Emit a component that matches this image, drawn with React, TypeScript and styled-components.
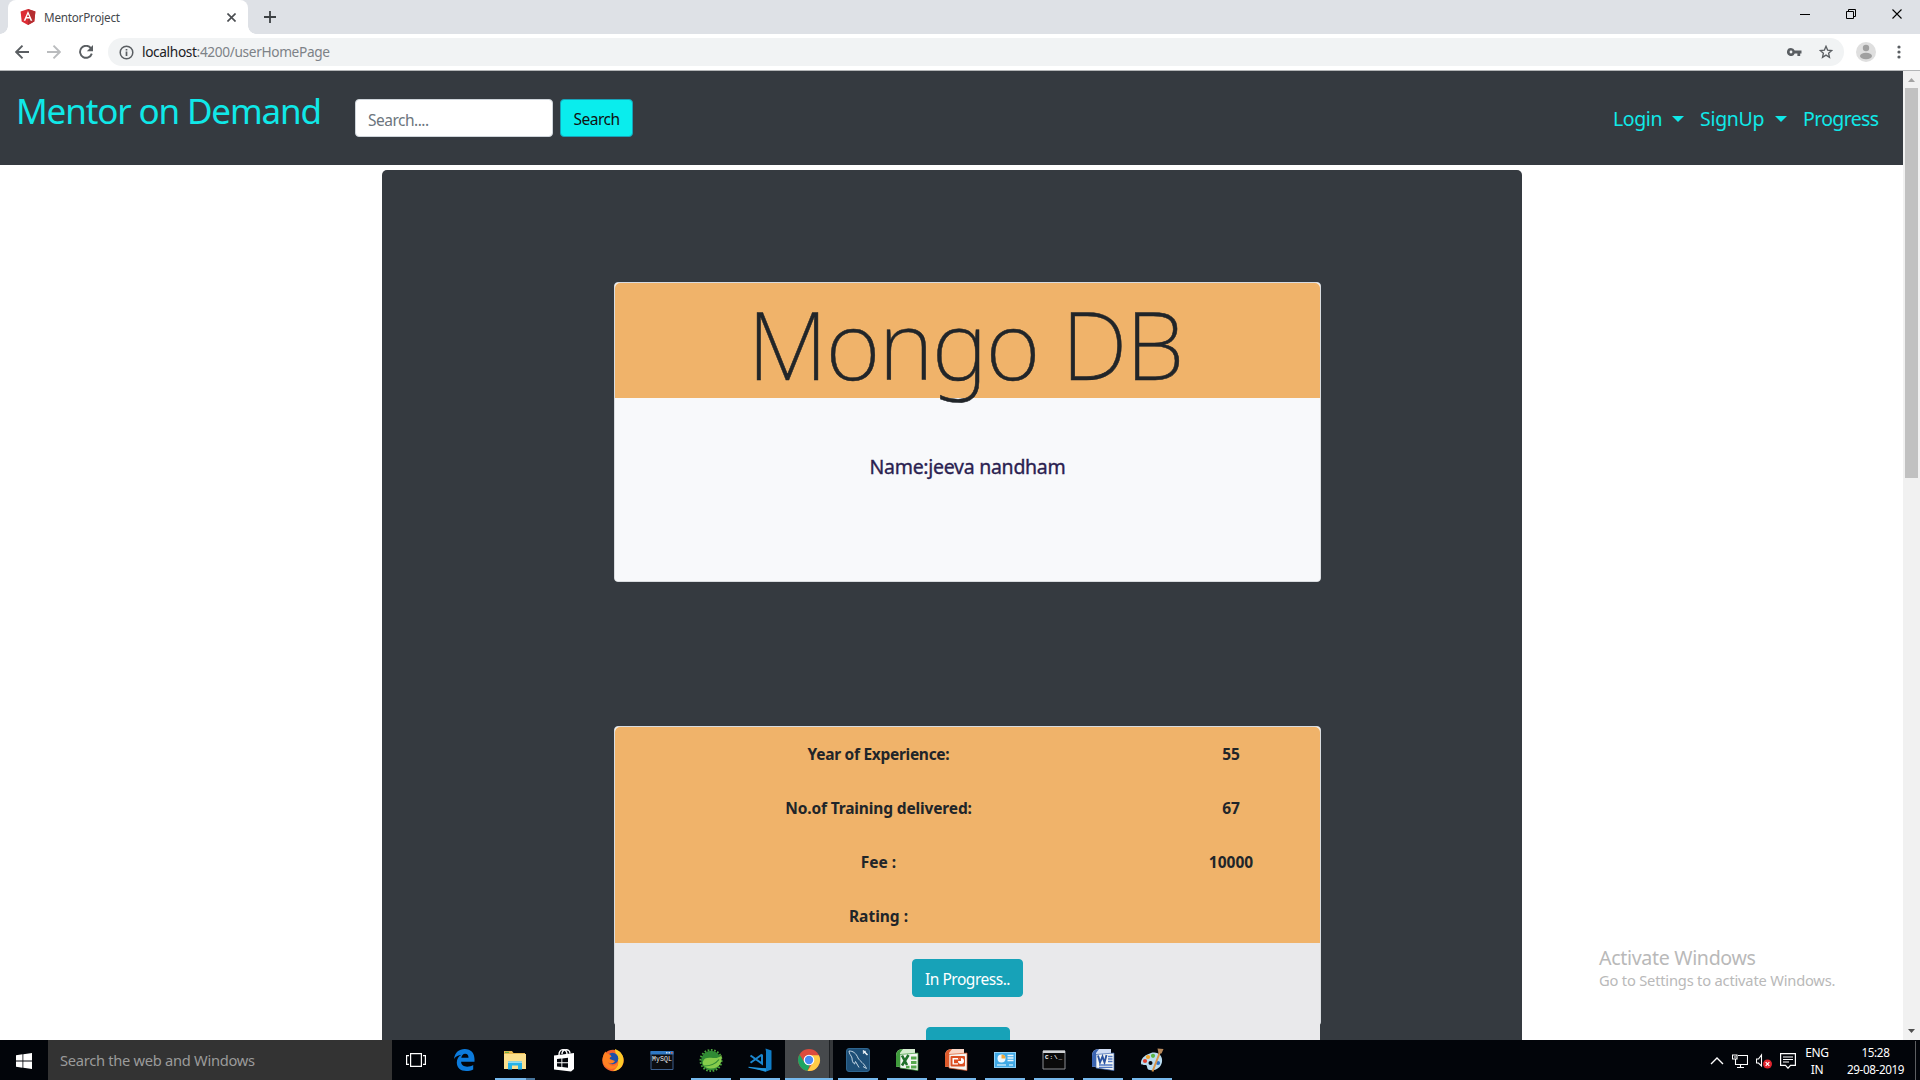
import React from 'react';
import styled, { createGlobalStyle, css } from 'styled-components';

const GlobalStyle = createGlobalStyle`
  *, *::before, *::after { box-sizing: border-box; }
  body { margin: 0; overflow: hidden; background: #fff; }
`;

const Screen = styled.div`
  position: relative;
  display: flex;
  flex-direction: column;
  width: 1920px;
  height: 1080px;
  overflow: hidden;
  font-family: 'Noto Sans', 'Open Sans', sans-serif;
  color: #212529;
  white-space: nowrap;
`;

/* ---------- browser chrome ---------- */

const TabStrip = styled.div`
  display: flex;
  flex: 0 0 34px;
  padding-left: 8px;
  background: #dee1e6;
`;

const Tab = styled.div`
  position: relative;
  display: flex;
  align-items: center;
  width: 240px;
  height: 34px;
  padding: 0 12px 0 12px;
  background: #fff;
  border-radius: 8px 8px 0 0;

  &::before,
  &::after {
    content: '';
    position: absolute;
    bottom: 0;
    width: 8px;
    height: 8px;
  }
  &::before {
    left: -8px;
    background: radial-gradient(circle at 0 0, transparent 7.5px, #fff 8px);
  }
  &::after {
    right: -8px;
    background: radial-gradient(circle at 100% 0, transparent 7.5px, #fff 8px);
  }
`;

const TabTitle = styled.span`
  flex: 1;
  margin-left: 8px;
  font-size: 11.7px;
  letter-spacing: -0.22px;
  line-height: 34px;
  color: #45494d;
`;

const NewTab = styled.div`
  display: flex;
  align-items: center;
  margin-left: 16px;
`;

const WindowControls = styled.div`
  display: flex;
  gap: 36px;
  margin: 9px 18px 0 auto;
  height: 10px;
`;

const Toolbar = styled.div`
  display: flex;
  flex: 0 0 37px;
  align-items: center;
  padding: 0 16px 0 15px;
  background: #fff;
  border-bottom: 1px solid #b3b5b7;
`;

const NavIcons = styled.div`
  display: flex;
  gap: 18px;
  margin-right: 15px;
`;

const Omnibox = styled.div`
  display: flex;
  align-items: center;
  width: 1736px;
  height: 28px;
  padding: 0 11px;
  border-radius: 14px;
  background: #f1f3f4;
`;

const Url = styled.span`
  flex: 1;
  margin-left: 8px;
  font-size: 13.7px;
  letter-spacing: -0.36px;
  line-height: 28px;
  color: #7d8287;
`;

const UrlHost = styled.span`
  color: #202124;
`;

const OmniboxActions = styled.div`
  display: flex;
  align-items: center;
  gap: 17px;
`;

const Avatar = styled.div`
  display: flex;
  margin: 0 21px 0 12px;
`;

/* ---------- page ---------- */

const Viewport = styled.div`
  display: flex;
  flex: 0 0 969px;
  overflow: hidden;
`;

const Page = styled.main`
  width: 1903px;
  height: 969px;
  overflow: hidden;
  background: #fff;
`;

const Navbar = styled.nav`
  display: flex;
  align-items: flex-start;
  height: 94px;
  padding: 0 24px 0 16px;
  background: #353a40;
  color: #10e8e8;
`;

const Brand = styled.a`
  width: 339px;
  padding-top: 13px;
  font-size: 35px;
  letter-spacing: -1.15px;
  line-height: 54px;
`;

const SearchForm = styled.form`
  display: flex;
  gap: 7px;
  margin-top: 28px;
`;

const SearchInput = styled.input`
  width: 198px;
  height: 38px;
  padding: 3px 12px 0;
  border: 1px solid #ced4da;
  border-radius: 4px;
  background: #fff;
  font: 15.5px 'Noto Sans', sans-serif;
  letter-spacing: -0.5px;

  &::placeholder {
    color: #6c757d;
    opacity: 1;
  }
`;

const Button = styled.button<{ $w: number; $search?: boolean }>`
  width: ${(p) => p.$w}px;
  height: 38px;
  padding: 1px 0 0;
  border: 1px solid #17a2b8;
  border-radius: 4px;
  background: ${(p) => (p.$search ? '#0aeded' : '#17a2b8')};
  color: ${(p) => (p.$search ? '#111' : '#fff')};
  font: 15.5px 'Noto Sans', sans-serif;
  letter-spacing: -0.48px;
`;

const NavLinks = styled.div`
  display: flex;
  gap: 16px;
  margin-left: auto;
`;

const NavLink = styled.a<{ $w: number; $ls: number }>`
  display: flex;
  align-items: center;
  justify-content: space-between;
  width: ${(p) => p.$w}px;
  font-size: 19.5px;
  letter-spacing: ${(p) => p.$ls}px;
  line-height: 95px;
`;

const Caret = styled.span`
  width: 12px;
  border: 6px solid transparent;
  border-top-color: #10e8e8;
  border-bottom: 0;
`;

const Shell = styled.section`
  display: flex;
  flex-direction: column;
  gap: 144px;
  width: 1140px;
  height: 1400px;
  margin: 5px auto 0;
  padding: 112px 0 0 232.5px;
  border-radius: 5px;
  background: #353a40;
`;

const Card = styled.article`
  flex: none;
  width: 707px;
  height: 300px;
  border: 1px solid #d9dce0;
  border-radius: 4px;
  background: #fff;
`;

const orangeTop = css`
  background: #f0b36a;
  border-radius: 5px 5px 0 0;
`;

const CourseTitle = styled.h1`
  ${orangeTop}
  height: 115px;
  margin: 0;
  padding-right: 5px;
  font-size: 94px;
  font-weight: 200;
  letter-spacing: -1.6px;
  line-height: 122px;
  text-align: center;
  -webkit-text-stroke: 0.5px #212529;
`;

const CourseBody = styled.div`
  height: 183px;
  padding-top: 50px;
  border-radius: 0 0 3px 3px;
  background: #f8f9fb;
`;

const MentorName = styled.h5`
  margin: 0;
  font-size: 19.5px;
  font-weight: 400;
  letter-spacing: -0.28px;
  line-height: 38px;
  text-align: center;
  color: #2a2150;
  -webkit-text-stroke: 0.35px #2a2150;
`;

const Facts = styled.dl`
  ${orangeTop}
  display: grid;
  grid-template-columns: 527px 178px;
  grid-auto-rows: 54px;
  margin: 0;
  font-size: 15.5px;
  font-weight: 700;
  line-height: 55px;
  text-align: center;
`;

const Fact = styled.dt<{ $ls?: number }>`
  letter-spacing: ${(p) => p.$ls ?? 0}px;
`;

const FactValue = styled.dd`
  margin: 0;
`;

const Actions = styled.div`
  display: flex;
  flex-direction: column;
  align-items: center;
  gap: 30px;
  height: 200px;
  padding-top: 16px;
  background: #e9e9eb;
`;

const Scrollbar = styled.div`
  display: flex;
  flex-direction: column;
  align-items: center;
  width: 17px;
  background: #f1f1f1;
`;

const Thumb = styled.div`
  width: 13px;
  height: 390px;
  margin-bottom: auto;
  background: #c1c1c1;
`;

const Watermark = styled.div`
  position: absolute;
  left: 1599px;
  top: 943px;
  color: #b9b9b9;
`;

const WatermarkTitle = styled.div`
  font-size: 19.6px;
  letter-spacing: -0.33px;
  line-height: 29px;
`;

const WatermarkText = styled.div`
  font-size: 14.7px;
  letter-spacing: -0.2px;
  line-height: 16px;
`;

/* ---------- taskbar ---------- */

const Taskbar = styled.footer`
  display: flex;
  flex: 0 0 40px;
  background: #02050a;
  color: #fff;
`;

const Start = styled.div`
  display: flex;
  align-items: center;
  justify-content: center;
  width: 48px;
`;

const TaskSearch = styled.div`
  width: 344px;
  padding-left: 12px;
  background: #333;
  color: #9b9b9b;
  font-size: 14.7px;
  letter-spacing: -0.29px;
  line-height: 41px;
`;

const Apps = styled.div`
  display: flex;
  gap: 1px;
`;

const AppSlot = styled.div<{ $running?: boolean; $active?: boolean; $stacked?: boolean }>`
  display: flex;
  align-items: center;
  justify-content: center;
  width: 48px;
  height: 40px;
  background: ${(p) =>
    p.$active
      ? 'linear-gradient(90deg, #46494c 44px, #1d2023 44px, #1d2023 45px, #34373a 45px)'
      : 'transparent'};

  &::after {
    content: '';
    align-self: flex-end;
    width: ${(p) => (p.$active ? 48 : 40)}px;
    height: 2px;
    margin-left: ${(p) => (p.$active ? -48 : -40)}px;
    background: ${(p) =>
      p.$stacked
        ? 'linear-gradient(90deg, #76b9ed 31px, #47759c 31px)'
        : p.$running || p.$active
          ? '#76b9ed'
          : 'transparent'};
  }

  & > svg {
    flex: none;
    margin: 0 ${(p) => (p.$active ? 12 : 8)}px;
  }
`;

const AppGroup = styled.div`
  display: flex;
  gap: 1px;
  margin-left: 1px;
`;

const Tray = styled.div`
  display: flex;
  align-items: center;
  margin-left: auto;
`;

const TrayIcons = styled.div`
  display: flex;
  align-items: center;
  gap: 8px;
`;

const Language = styled.div`
  width: 42px;
  font-size: 12px;
  letter-spacing: -0.4px;
  line-height: 17px;
  text-align: center;
`;

const Clock = styled.div`
  width: 75px;
  font-size: 11.7px;
  letter-spacing: -0.38px;
  line-height: 17px;
  text-align: center;
`;

const ShowDesktop = styled.div`
  width: 5px;
  height: 40px;
  margin-left: 2px;
  border-left: 1px solid #5c5e61;
`;

/* ---------- drawings ---------- */

const AngularLogo = () => (
  <svg width="16" height="16" viewBox="0 0 16 16">
    <path d="M8 0 15.4 2.6 14.3 12.4 8 16 1.7 12.4.6 2.6Z" fill="#dd2c35" />
    <path d="M8 0 15.4 2.6 14.3 12.4 8 16Z" fill="#b52e31" />
    <path d="M8 2 3.7 11.8H5.4L6.3 9.6H9.7L10.6 11.8H12.3ZM8 5.2 9.2 8.1H6.8Z" fill="#fff" />
  </svg>
);

const Cross = ({ size, color, w }: { size: number; color: string; w: number }) => (
  <svg width={size} height={size} viewBox="0 0 10 10">
    <path d="M.5.5 9.5 9.5M9.5.5.5 9.5" stroke={color} strokeWidth={w} />
  </svg>
);

const Arrow = ({ color, flip }: { color: string; flip?: boolean }) => (
  <svg width="14" height="14" viewBox="0 0 14 14">
    <path
      d={flip ? 'M0 7H13M6.5.7 12.8 7 6.5 13.3' : 'M14 7H1M7.5.7 1.2 7 7.5 13.3'}
      fill="none"
      stroke={color}
      strokeWidth="1.9"
    />
  </svg>
);

const Reload = () => (
  <svg width="14" height="14" viewBox="0 0 14 14">
    <path d="M11.8 3.1A6 6 0 1 0 12.8 8.6" fill="none" stroke="#5a5e62" strokeWidth="1.9" />
    <path d="M14 0V6.2H7.8Z" fill="#5a5e62" />
  </svg>
);

const Info = () => (
  <svg width="15" height="15" viewBox="0 0 15 15">
    <circle cx="7.5" cy="7.5" r="6.3" fill="none" stroke="#5a5e62" strokeWidth="1.5" />
    <path d="M7.5 6.6V11M7.5 4V5.5" stroke="#5a5e62" strokeWidth="1.7" />
  </svg>
);

const Key = () => (
  <svg width="15" height="8" viewBox="0 0 15 8">
    <path
      fillRule="evenodd"
      fill="#5a5e62"
      d="M4 0A4 4 0 0 1 7.7 2.6H14.5V5.4H13.2V8H10.4V5.4H7.7A4 4 0 1 1 4 0ZM4 2.6A1.4 1.4 0 1 0 4 5.4 1.4 1.4 0 0 0 4 2.6Z"
    />
  </svg>
);

const Star = () => (
  <svg width="14" height="14" viewBox="0 0 14 14">
    <path
      d="M7 1.3 8.6 5.1 12.7 5.5 9.6 8.2 10.5 12.3 7 10.1 3.5 12.3 4.4 8.2 1.3 5.5 5.4 5.1Z"
      fill="none"
      stroke="#5a5e62"
      strokeWidth="1.3"
    />
  </svg>
);

const Person = () => (
  <svg width="20" height="20" viewBox="0 0 20 20">
    <circle cx="10" cy="10" r="10" fill="#dfdfdf" />
    <circle cx="10" cy="6" r="3.2" fill="#a0a0a0" />
    <ellipse cx="10" cy="14" rx="6" ry="3.2" fill="#a0a0a0" />
  </svg>
);

const Dots = () => (
  <svg width="4" height="14" viewBox="0 0 4 14">
    {[2, 7, 12].map((y) => (
      <circle key={y} cx="2" cy={y} r="1.6" fill="#5a5e62" />
    ))}
  </svg>
);

const ScrollArrow = ({ down }: { down?: boolean }) => (
  <svg width="17" height="17" viewBox="0 0 17 17">
    <path d={down ? 'M5 6H12L8.5 10Z' : 'M5 11H12L8.5 7Z'} fill={down ? '#505050' : '#a3a3a3'} />
  </svg>
);

const WindowsLogo = () => (
  <svg width="16" height="16" viewBox="0 0 16 16" fill="#fff">
    <path d="M0 2.2 6.5 1.3V7.5H0ZM7.3 1.2 16 0V7.5H7.3ZM0 8.4H6.5V14.7L0 13.8ZM7.3 8.4H16V16L7.3 14.8Z" />
  </svg>
);

const TaskView = () => (
  <svg width="20" height="14" viewBox="0 0 20 14" fill="none" stroke="#fff" strokeWidth="1.2">
    <path d="M4.6.6H15.4V13.4H4.6ZM3 2.6H.6V11.4H3M17 2.6H19.4V11.4H17" />
  </svg>
);

const Icon = ({ children }: { children: React.ReactNode }) => (
  <svg width="24" height="24" viewBox="0 0 24 24">
    {children}
  </svg>
);

const Edge = () => (
  <Icon>
    <path
      fill="#0c7bdc"
      d="M1 11C1.800 4.500 6 1 11.800 1 18 1 21.500 5.300 21.500 11V13.800H8.100C8.200 17.200 11 18.700 14.100 18.700 16.500 18.700 18.500 18 20.200 17V21.400C18.200 22.500 15.800 23 13.200 23 7.500 23 3.800 19.600 3.800 14.500 3.800 11 5.700 8.200 8.500 6.800 5.500 7.200 2.600 8.600 1 11ZM8.300 9.700H15.500C15.500 7.300 14.400 5.700 12.100 5.700 10 5.700 8.700 7.400 8.300 9.700Z"
    />
  </Icon>
);

const Folder = () => (
  <Icon>
    <path d="M1 3H9L10.500 5H22V20.500H1Z" fill="#e9b94f" />
    <path d="M1 6H23V21H1Z" fill="#fbe08d" />
    <path d="M2 3.800H6V5H2Z" fill="#6bb24a" />
    <path d="M5 13.500H19V21.500H15V17.500H9V21.500H5Z" fill="#26b3e8" />
    <path d="M5 13.500H19V15H5Z" fill="#8fdcf6" />
  </Icon>
);

const Store = () => (
  <Icon>
    <path d="M2 7.500 22 5V21L19 23.500 2 21.500Z" fill="#fff" />
    <path d="M7 7C7 0 15 0 15 6M10 6C10 1 18 0 18 5.500" fill="none" stroke="#fff" strokeWidth="1.4" />
    <path d="M5 11 9.400 10.500V14.300H5ZM10.300 10.400 16 9.800V14.300H10.300ZM5 15.200H9.400V19L5 18.500ZM10.300 15.200H16V19.800L10.300 19.100Z" fill="#02050a" />
  </Icon>
);

const Firefox = () => (
  <Icon>
    <circle cx="12" cy="12.500" r="10.700" fill="#f4622c" />
    <path d="M14 1C20 3 23 8 22.500 13 22 19 17.500 23 12 23 16 20 18 17 17 12 16.500 8 14 6 14 1Z" fill="#fdc928" />
    <circle cx="11.500" cy="10.500" r="5.800" fill="#1f4fa8" />
    <path d="M1.600 12C1.600 8 3 5 4.500 3.500 5 5.500 7 6 9 6.500L10.500 8.500C8.500 9.500 8 11 10 11.500L14 13C12 16 9 16 7 14.500 9 19 15 18.500 17 14 17.500 20 11 22.500 7 20 4 18.500 2 16 1.600 12Z" fill="#ff8122" />
  </Icon>
);

const MySqlShell = () => (
  <Icon>
    <path d="M1 3.500H23V21.500H1Z" fill="#0b0c10" stroke="#3d5f8e" strokeWidth="1" />
    <path d="M.500 3H23.500V6.500H.500Z" fill="#2f78c4" />
    <path d="M16 4H17.500V5.500H16ZM18.500 4H20V5.500H18.500Z" fill="#c9dcf0" />
    <path d="M21 4H22.500V5.500H21Z" fill="#e2603a" />
    <text x="2" y="13" fontSize="6.500" fill="#f0f0f0" fontFamily="Liberation Mono, monospace" textLength="20">
      MySQL
    </text>
  </Icon>
);

const Spring = () => (
  <Icon>
    <circle cx="12" cy="12.500" r="9.800" fill="#2f8a34" />
    <circle cx="12" cy="12.500" r="10.600" fill="none" stroke="#4da83e" strokeWidth="1.800" strokeDasharray="1.700 1.600" />
    <path d="M22.500 7C23.500 15 20 21 11 20.500 6 20 3 17 4 13.500 5 9.500 9 9.500 14 10 18 10.300 20.500 9.500 22.500 7Z" fill="#86cc4b" />
    <path d="M5 18C10 18 16 16.500 20 11.500" fill="none" stroke="#2f8a34" strokeWidth="1.200" />
  </Icon>
);

const VsCode = () => (
  <Icon>
    <path d="M17.500.500 23.500 2.500V21.500L17.500 23.800 7 20.500 18 20.500V3.500Z" fill="#0f7dc7" />
    <path d="M.500 18.800 18 20.300V23.500L.500 19.800Z" fill="#2196dd" />
    <path d="M14 6.500V15.500L2.500 7.500M14 6.500 2.500 14.800" fill="none" stroke="#1b87cf" strokeWidth="2" />
  </Icon>
);

const Chrome = () => (
  <Icon>
    <circle cx="12" cy="12" r="11" fill="#dd4b3e" />
    <path d="M2.500 6.500 7.500 14.500 12.800 17 10.500 22.900A11 11 0 0 1 2.500 6.500Z" fill="#1da462" />
    <path d="M12 7.200H21.900A11 11 0 0 1 10.500 22.900L16.500 13.800Z" fill="#ffcd46" />
    <circle cx="12" cy="12" r="5.300" fill="#fff" />
    <circle cx="12" cy="12" r="4.200" fill="#4a8af4" />
  </Icon>
);

const Workbench = () => (
  <Icon>
    <rect x=".500" y=".500" width="23" height="23" rx="2.500" fill="#1e4f77" stroke="#2f6690" />
    <path d="M3 3C7 3 10 5 12 10 14 13.500 18 15 20.500 20.500L17 18.500M3 3C3 6 5 7 6 10 6 13 7 15 8.500 16L9.500 13.500 13 19.500" fill="none" stroke="#c3d5e3" strokeWidth="1" />
    <path d="M17 2.500 21.500 7" stroke="#eef4f8" strokeWidth="1.600" />
    <path d="M17 5.500 19.500 3" stroke="#eef4f8" strokeWidth="1.200" />
  </Icon>
);

const OfficeIcon = ({ main, light, children }: { main: string; light: string; children: React.ReactNode }) => (
  <Icon>
    <path d="M1 8Q1 1 8 1H20V17L1 19Z" fill={light} />
    <path d="M1 8Q1 1 8 1L5 5V18.600L1 19Z" fill={main} />
    <path d="M5 6.500 23 5V22.500L5 20Z" fill="#f4f6f3" stroke={main} strokeWidth=".700" />
    {children}
  </Icon>
);

const Excel = () => (
  <OfficeIcon main="#3f9b3c" light="#d5ecd0">
    <path d="M7 7.500 12 17M13.500 7 7 17.500" stroke="#20702a" strokeWidth="2.600" />
    <path d="M16 8.500H21.500V11.500H16ZM16 13H21.500V16H16ZM16 17.500H21.500V20.500H16ZM11 17.800H14.500V20.300H11Z" fill="#57a94d" />
  </OfficeIcon>
);

const PowerPoint = () => (
  <OfficeIcon main="#dd5a2b" light="#f9d6c6">
    <rect x="6.500" y="8" width="14.500" height="10.500" rx="1" fill="#dc4f22" />
    <path d="M8.500 10H14V11.400H10V15.200H14V16.600H8.500Z" fill="#fff" />
    <circle cx="17" cy="13" r="3" fill="#fff" />
    <path d="M17 13V10A3 3 0 0 0 14 13Z" fill="#dc4f22" />
  </OfficeIcon>
);

const Word = () => (
  <OfficeIcon main="#3b64b0" light="#cfdcf3">
    <path d="M7 7.500 9 14.500 11.500 8.500 13.500 14.500 15.500 7" fill="none" stroke="#2a52a0" strokeWidth="1.900" />
    <path d="M17 8.500H21.500M17 11H21.500M17 13.500H21.500M8 17H21.500M8 19.300H21.500" stroke="#4f78c4" strokeWidth="1.300" />
  </OfficeIcon>
);

const ControlPanel = () => (
  <Icon>
    <rect x="1.500" y="4.500" width="21" height="15" fill="#3fa9e6" stroke="#8fd0f5" />
    <circle cx="8.500" cy="10.500" r="4" fill="#eaf6fd" />
    <path d="M8.500 10.500V6.500A4 4 0 0 1 12.500 10.500Z" fill="#f0a83a" />
    <path d="M14.500 7.500H20.500M14.500 10H20.500M14.500 12.500H20.500" stroke="#eaf6fd" strokeWidth="1.400" />
    <path d="M4 17H13M16 17H20" stroke="#bde3f8" strokeWidth="1.400" />
  </Icon>
);

const Cmd = () => (
  <Icon>
    <path d="M1 3H23V21H1Z" fill="#0a0a0a" stroke="#8a8d91" />
    <path d="M1 2.500H23V5H1Z" fill="#d0d2d5" />
    <text x="3" y="11" fontSize="6" fontWeight="700" fill="#fff" fontFamily="Liberation Mono, monospace" textLength="17">
      C:\_
    </text>
  </Icon>
);

const Paint = () => (
  <Icon>
    <path d="M11 5C18 3 23 8 22 14 21 20 15 23 10 22 6 21.500 8 18 6 17 4 16.500.500 18 1 14 1.500 9.500 6 6.500 11 5Z" fill="#b9dcf0" />
    <circle cx="5" cy="13" r="2.100" fill="#e0402e" />
    <circle cx="8" cy="9" r="2.100" fill="#f2a52a" />
    <circle cx="13" cy="7.800" r="2.100" fill="#58b544" />
    <circle cx="10.500" cy="15" r="2" fill="#02050a" />
    <circle cx="18" cy="15" r="2.100" fill="#2d6fc4" />
    <path d="M12.500 23.500 20 4" stroke="#d99448" strokeWidth="2" />
    <path d="M17.500.500 23.500 1 21.500 5.500 18.500 5Z" fill="#b98a5c" />
  </Icon>
);

const Chevron = () => (
  <svg width="14" height="9" viewBox="0 0 14 9">
    <path d="M1 8 7 2 13 8" fill="none" stroke="#fff" strokeWidth="1.400" />
  </svg>
);

const Network = () => (
  <svg width="16" height="16" viewBox="0 0 16 16" fill="none" stroke="#fff" strokeWidth="1.100">
    <path d="M6 2.500H15.500V11.500H3.500V6.500M8.500 11.500V14.500M5 14.500H12M.500 2H5V6H.500ZM2 4H4" />
  </svg>
);

const Speaker = () => (
  <svg width="16" height="16" viewBox="0 0 16 16">
    <path d="M.500 6H2.500L5.500 2V13L2.500 10H.500Z" fill="none" stroke="#fff" strokeWidth="1.100" />
    <circle cx="11.500" cy="11" r="4.500" fill="#e0252f" />
    <path d="M9.700 9.200 13.300 12.800M13.300 9.200 9.700 12.800" stroke="#fff" strokeWidth="1.200" />
  </svg>
);

const ActionCenter = () => (
  <svg width="16" height="16" viewBox="0 0 16 16" fill="none" stroke="#fff" strokeWidth="1.200">
    <path d="M.600.600H15.400V12.400H10.500L8 15.200 5.500 12.400H.600ZM3 4H13M3 6.500H13M3 9H9" />
  </svg>
);

const facts = [
  { label: 'Year of Experience:', value: '55', ls: -0.29 },
  { label: 'No.of Training delivered:', value: '67', ls: -0.14 },
  { label: 'Fee :', value: '10000', ls: 0 },
  { label: 'Rating :', value: '', ls: 0 },
];

export default function App() {
  return (
    <Screen>
      <GlobalStyle />
      <TabStrip>
        <Tab>
          <AngularLogo />
          <TabTitle>MentorProject</TabTitle>
          <Cross size={9} color="#4a4d51" w={1.8} />
        </Tab>
        <NewTab>
          <svg width="12" height="12" viewBox="0 0 12 12">
            <path d="M6 0V12M0 6H12" stroke="#3c4043" strokeWidth="1.8" />
          </svg>
        </NewTab>
        <WindowControls>
          <svg width="10" height="10" viewBox="0 0 10 10">
            <path d="M0 5.500H10" stroke="#000" />
          </svg>
          <svg width="10" height="10" viewBox="0 0 10 10">
            <path d="M.5 2.500H7.500V9.500H.5ZM2.500 2.500V.5H9.500V7.500H7.500" fill="none" stroke="#000" />
          </svg>
          <Cross size={10} color="#000" w={1.1} />
        </WindowControls>
      </TabStrip>
      <Toolbar>
        <NavIcons>
          <Arrow color="#5a5e62" />
          <Arrow color="#babcbe" flip />
          <Reload />
        </NavIcons>
        <Omnibox>
          <Info />
          <Url>
            <UrlHost>localhost</UrlHost>:4200/userHomePage
          </Url>
          <OmniboxActions>
            <Key />
            <Star />
          </OmniboxActions>
        </Omnibox>
        <Avatar>
          <Person />
        </Avatar>
        <Dots />
      </Toolbar>

      <Viewport>
        <Page>
          <Navbar>
            <Brand>Mentor on Demand</Brand>
            <SearchForm>
              <SearchInput placeholder="Search...." />
              <Button type="button" $w={73} $search>
                Search
              </Button>
            </SearchForm>
            <NavLinks>
              <NavLink $w={71} $ls={-0.4}>
                Login
                <Caret />
              </NavLink>
              <NavLink $w={87} $ls={-0.3}>
                SignUp
                <Caret />
              </NavLink>
              <NavLink $w={76} $ls={-0.65}>
                Progress
              </NavLink>
            </NavLinks>
          </Navbar>
          <Shell>
            <Card>
              <CourseTitle>Mongo DB</CourseTitle>
              <CourseBody>
                <MentorName>Name:jeeva nandham</MentorName>
              </CourseBody>
            </Card>
            <Card>
              <Facts>
                {facts.map((f) => (
                  <React.Fragment key={f.label}>
                    <Fact $ls={f.ls}>{f.label}</Fact>
                    <FactValue>{f.value}</FactValue>
                  </React.Fragment>
                ))}
              </Facts>
              <Actions>
                <Button $w={111}>In Progress..</Button>
                <Button $w={84} />
              </Actions>
            </Card>
          </Shell>
        </Page>
        <Scrollbar>
          <ScrollArrow />
          <Thumb />
          <ScrollArrow down />
        </Scrollbar>
      </Viewport>

      <Taskbar>
        <Start>
          <WindowsLogo />
        </Start>
        <TaskSearch>Search the web and Windows</TaskSearch>
        <Apps>
          <AppSlot><TaskView /></AppSlot>
          <AppSlot><Edge /></AppSlot>
          <AppGroup>
            <AppSlot $running $stacked><Folder /></AppSlot>
            <AppSlot><Store /></AppSlot>
            <AppSlot><Firefox /></AppSlot>
            <AppSlot><MySqlShell /></AppSlot>
            <AppSlot $running><Spring /></AppSlot>
            <AppSlot $running><VsCode /></AppSlot>
            <AppSlot $active><Chrome /></AppSlot>
            <AppSlot $running><Workbench /></AppSlot>
            <AppSlot $running><Excel /></AppSlot>
            <AppSlot $running><PowerPoint /></AppSlot>
            <AppSlot $running><ControlPanel /></AppSlot>
            <AppSlot $running><Cmd /></AppSlot>
            <AppSlot $running><Word /></AppSlot>
            <AppSlot $running><Paint /></AppSlot>
          </AppGroup>
        </Apps>
        <Tray>
          <TrayIcons>
            <Chevron />
            <Network />
            <Speaker />
            <ActionCenter />
          </TrayIcons>
          <Language>
            ENG
            <br />
            IN
          </Language>
          <Clock>
            15:28
            <br />
            29-08-2019
          </Clock>
          <ShowDesktop />
        </Tray>
      </Taskbar>

      <Watermark>
        <WatermarkTitle>Activate Windows</WatermarkTitle>
        <WatermarkText>Go to Settings to activate Windows.</WatermarkText>
      </Watermark>
    </Screen>
  );
}
